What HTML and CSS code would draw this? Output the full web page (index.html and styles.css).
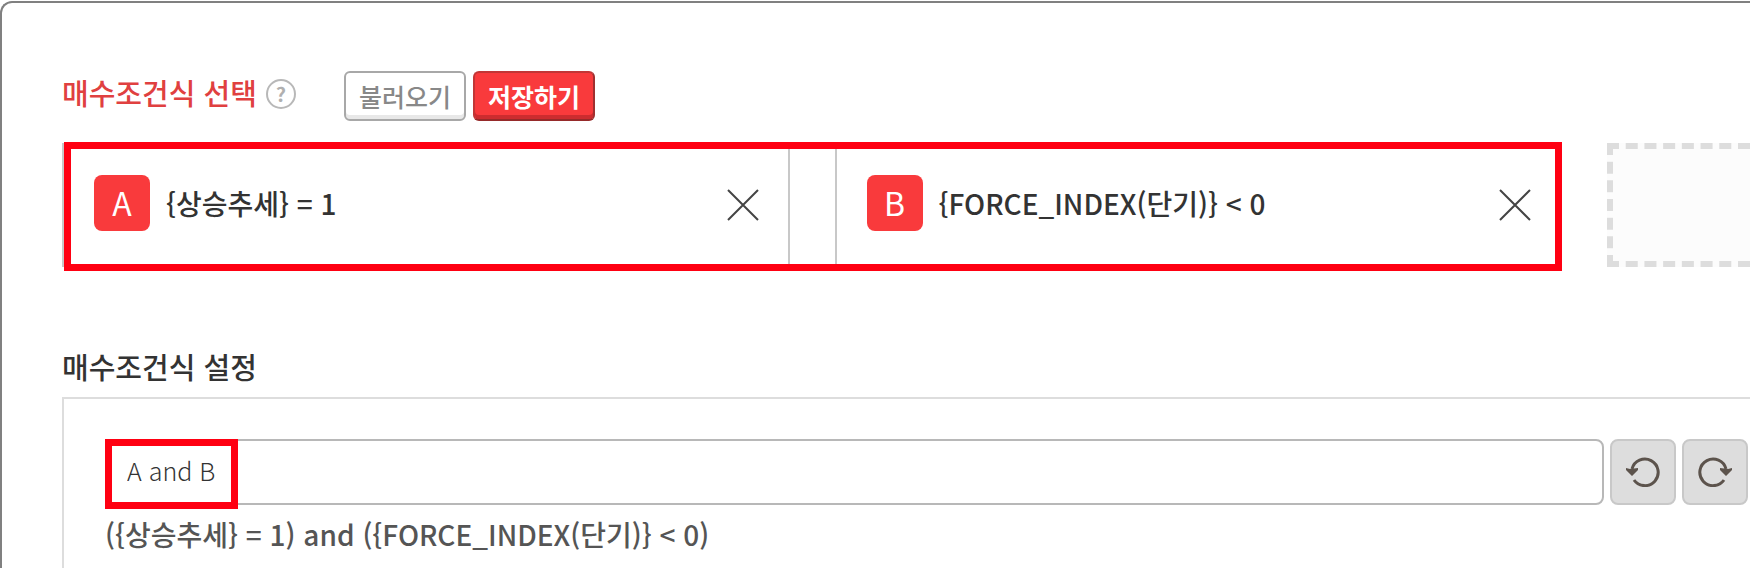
FILE: index.html
```html
<!DOCTYPE html>
<html lang="ko">
<head>
  <meta charset="UTF-8">
  <meta name="viewport" content="width=device-width, initial-scale=1.0">

  <title>매수조건식</title>

  <link rel="stylesheet" href="styles.css">
</head>
<body>

<div class="panel">
  <div class="title-row">
    <h2 class="title red">매수조건식 선택</h2>
    <button type="button" class="help">?</button>
    <div class="actions">
      <button type="button" class="btn">불러오기</button>
      <button type="button" class="btn btn-save">저장하기</button>
    </div>
  </div>

  <div class="cards">
    <div class="selected">
      <div class="card">
        <span class="badge">A</span>
        <span class="card-text">{상승추세} = 1</span>
        <button type="button" class="close" aria-label="A 삭제">
          <svg width="32" height="32" viewBox="0 0 32 32"><path d="M1 1L31 31M31 1L1 31" stroke="#444" stroke-width="2"/></svg>
        </button>
      </div>
      <div class="card">
        <span class="badge">B</span>
        <span class="card-text">{FORCE_INDEX(단기)} &lt; 0</span>
        <button type="button" class="close" aria-label="B 삭제">
          <svg width="32" height="32" viewBox="0 0 32 32"><path d="M1 1L31 31M31 1L1 31" stroke="#444" stroke-width="2"/></svg>
        </button>
      </div>
    </div>
    <div class="empty-card"></div>
  </div>

  <h2 class="title"><label for="formula">매수조건식 설정</label></h2>

  <div class="setting">
    <div class="formula-row">
      <div class="formula-box">
        <input type="text" class="formula" id="formula" value="A and B">
      </div>
      <button type="button" class="tool" aria-label="실행 취소">
        <svg width="34" height="30" viewBox="0 0 34 30">
          <path d="M6 12A13.3 13.3 0 1 1 8 23" fill="none" stroke="#5c534c" stroke-width="3"/>
          <path d="M0 11L4 12L12 11V13L6 19L0 13Z" fill="#5c534c"/>
        </svg>
      </button>
      <button type="button" class="tool" aria-label="다시 실행">
        <svg width="34" height="30" viewBox="0 0 34 30">
          <path d="M28 12A13.3 13.3 0 1 0 26 23" fill="none" stroke="#5c534c" stroke-width="3"/>
          <path d="M34 11L30 12L22 11V13L28 19L34 13Z" fill="#5c534c"/>
        </svg>
      </button>
    </div>
    <p class="result">({상승추세} = 1) and ({FORCE_INDEX(단기)} &lt; 0)</p>
  </div>
</div>

</body>
</html>
```

FILE: styles.css
```css
*,
*::after {
  box-sizing: border-box;
}

body {
  margin: 0;
  background-color: #fff;
  font-family: "Noto Sans CJK KR", sans-serif;
  color: #333;
}

button,
input {
  font-family: inherit;
}

button {
  padding: 0;
  cursor: pointer;
}

svg {
  display: block;
}

.panel {
  display: flex;
  flex-direction: column;
  min-height: calc(100vh - 1px);
  margin-top: 1px;
  padding: 68px 0 0 60px;
  border: 2px solid #808080;
  border-right: none;
  border-bottom: none;
  border-top-left-radius: 12px;
}

.title-row {
  display: flex;
  align-items: flex-start;
}

.title {
  margin: 0;
  font-size: 29px;
  font-weight: 500;
  line-height: 42px;
}

.red {
  color: #e04040;
}

.help {
  width: 30px;
  height: 30px;
  margin: 8px 0 0 9px;
  border: 2px solid #b8b8b8;
  border-radius: 50%;
  background-color: #fff;
  color: #b0b0b0;
  font-size: 20px;
  font-weight: 700;
  line-height: 24px;
}

.actions {
  display: flex;
  gap: 7px;
  margin-left: 48px;
}

.btn {
  height: 50px;
  padding: 0 13px;
  border: 2px solid #a8a8a8;
  border-radius: 6px;
  background-color: #fff;
  box-shadow: inset 0 -4px #e8e8e8;
  color: #888;
  font-size: 25px;
  font-weight: 500;
  line-height: 44px;
}

.btn-save {
  border-color: #c23636 #a03030 #962a2a #c23636;
  background-color: #f93a3c;
  box-shadow: inset 0 -4px #cc2c2f;
  color: #fff;
  font-weight: 700;
}

.cards {
  display: grid;
  grid-template-columns: 21fr 2fr;
  gap: 45px;
  margin-bottom: 78px;
  padding-top: 22px;
}

.selected {
  position: relative;
  display: grid;
  grid-template-columns: 1fr 1fr;
  gap: 45px;
}

/* red frame drawn over the selected cards */
.selected::after {
  content: "";
  position: absolute;
  inset: -1px 0 -4px 2px;
  border: 7px solid #ff0012;
  pointer-events: none;
}

.card {
  display: flex;
  align-items: center;
  height: 124px;
  padding: 0 29px 4px 30px;
  border: 2px solid #c8c8c8;
}

.badge {
  width: 56px;
  height: 56px;
  border-radius: 8px;
  background-color: #f93a3c;
  color: #fff;
  font-size: 32px;
  line-height: 54px;
  text-align: center;
}

.card-text {
  margin-left: 16px;
  font-size: 28px;
  font-weight: 500;
}

.close {
  margin-top: 4px;
  margin-left: auto;
  border: none;
  background: none;
}

.empty-card {
  border: 6px dashed #ddd;
  border-right: none;
  background-color: #fcfcfc;
}

.setting {
  flex: 1;
  margin-top: 10px;
  padding: 40px 2px 0 41px;
  border: 2px solid #ddd;
  border-right: none;
  border-bottom: none;
}

.formula-row {
  display: flex;
  gap: 6px;
}

.formula-box {
  position: relative;
  flex: 1;
}

/* red frame drawn over the typed formula */
.formula-box::after {
  content: "";
  position: absolute;
  top: 0;
  left: 0;
  width: 133px;
  height: 70px;
  border: 7px solid #ff0012;
  pointer-events: none;
}

.formula {
  display: block;
  width: 100%;
  height: 66px;
  padding: 0 20px 4px;
  border: 2px solid #b8b8b8;
  border-radius: 8px;
  color: #333;
  font-size: 25px;
  font-weight: 300;
}

.tool {
  display: flex;
  align-items: center;
  justify-content: center;
  width: 66px;
  height: 66px;
  border: 2px solid #c8c8c8;
  border-radius: 8px;
  background-color: #ddd;
}

.result {
  margin: 8px 0 0;
  color: #555;
  font-size: 28px;
  font-weight: 500;
  line-height: 42px;
}
```
